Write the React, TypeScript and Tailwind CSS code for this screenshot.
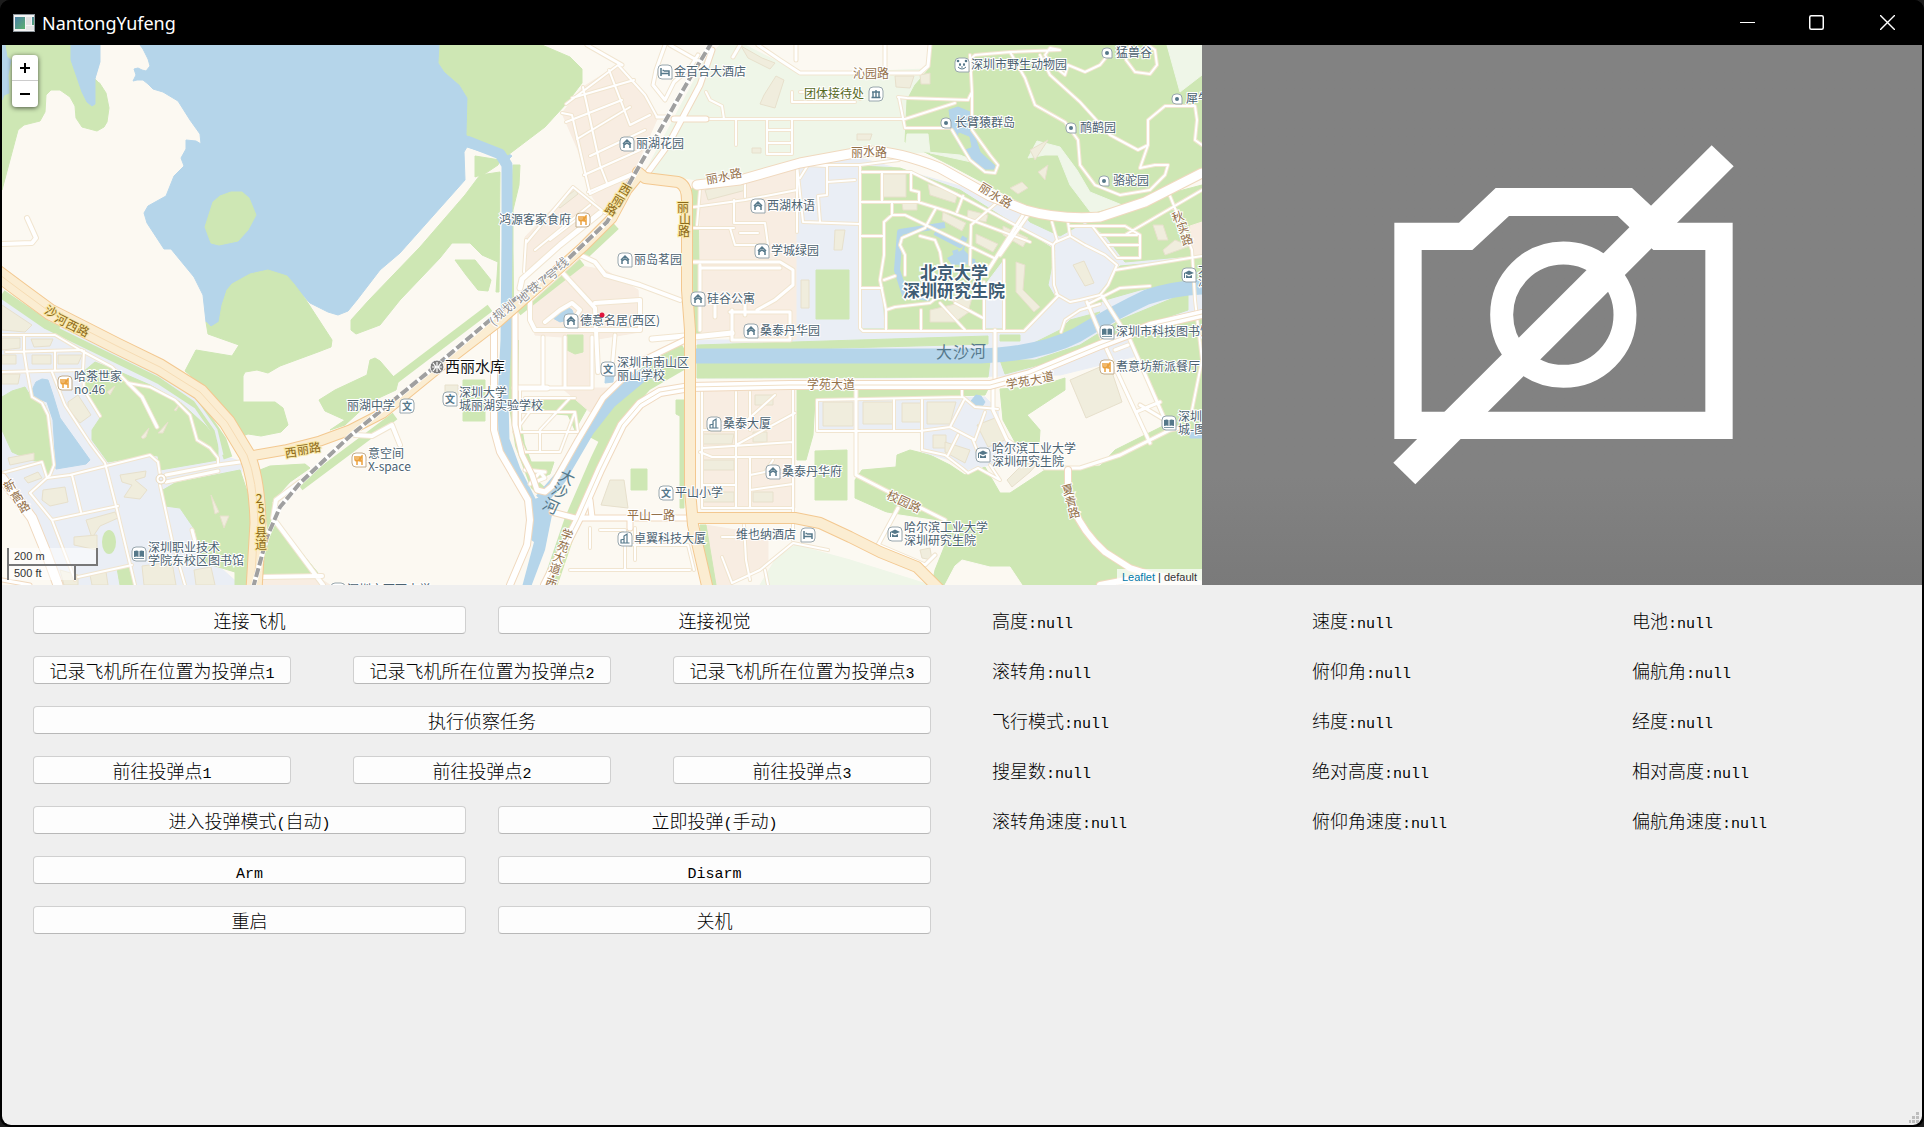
import React from "react";

const WATER = "#b5d5ea";
const GREEN = "#cee7b4";
const LIGHT = "#eff6e8";
const HOMES = "#f8ede2";
const CAMPUS = "#eaeef5";
const BUILDING = "#f0eddd";
const LAND = "#fcf9f2";
const MAP_FONT = '"Noto Sans CJK SC", "Noto Sans", sans-serif';

type Area = [fill: string, points: string];
type Road = [width: number, d: string];

const AREAS: Area[] = [
  // reservoir and its shores
  [GREEN, "2,190 18,130 24,125 40,121 45,112 46,95 51,90 60,90 70,97 75,106 76,118 82,127 97,131 104,127 107,122 109,108 106,93 97,79 71,45 2,45"],
  [WATER, "2,45 5,45 7,57 11,60 8,75 9,93 4,95 2,100"],
  [WATER, "71,45 71,60 82,92 87,102 92,106 95,104 95,79 101,62 101,45"],
  [LAND, "101,45 101,62 96,79 99,82 140,82 140,45"],
  [WATER, "140,45 143,49 148,59 150,66 146,71 142,70 138,68 134,69 136,75 133,81 137,80 143,80 148,84 153,89 163,92 178,101 190,120 200,134 201,144 196,141 186,140 186,149 181,158 184,166 174,176 166,196 148,206 144,213 147,223 164,249 171,249 194,277 203,295 206,322 211,327 219,322 224,300 298,290 310,303 328,312 338,315 348,311 357,300 380,270 400,253 465,180 464,152 467,147 508,160 512,156 502,149 467,135 468,98 460,85 445,72 439,63 440,45"],
  [GREEN, "222,305 227,290 232,284 250,274 268,270 287,276 294,284 306,300 332,340 331,347 318,352 280,366 268,373 257,370 245,372 243,376 243,402 275,402 283,408 288,425 281,432 261,436 248,434 240,437 216,398 210,392 185,371 196,350 232,356 239,345 208,334 206,322 211,327 219,322"],
  [GREEN, "205,227 213,202 220,196 231,192 242,192 249,198 256,215 248,230 238,241 219,245 211,243"],
  [GREEN, "440,45 542,45 570,57 582,69 582,83 566,104 545,127 508,155 502,150 467,135 468,98 460,85 445,72 439,63"],
  [GREEN, "351,320 369,300 420,247 465,195 480,175 500,172 499,292 496,292 498,262 482,255 470,243 452,243 440,258 420,279 400,300 380,325 356,334 351,330"],
  [GREEN, "475,156 500,160 498,165 486,173 475,177"],
  [GREEN, "455,260 475,260 491,280 488,291 478,290 466,275"],
  [GREEN, "513,165 520,165 519,185 513,210 513,250 514,340 510,340 511,210"],
  [GREEN, "319,400 335,390 367,375 370,360 375,358 380,361 398,382 396,390 370,402 345,425 330,430 345,420 325,411"],
  // west campus
  [CAMPUS, "2,297 12,297 60,325 160,372 190,395 215,430 222,455 242,462 242,472 175,485 165,500 185,510 195,530 195,545 240,585 60,585 30,515 2,478"],
  [GREEN, "2,397 12,391 25,387 33,400 45,405 50,430 52,470 47,475 42,462 30,460 12,452 2,430"],
  [WATER, "32,390 36,382 42,379 48,380 53,395 60,418 90,460 86,464 56,469 53,420 47,402 33,397"],
  [GREEN, "83,372 95,362 120,372 150,385 180,402 205,425 218,440 218,460 160,470 158,456 150,455 108,462 92,440 92,430 102,415 83,390"],
  [GREEN, "163,490 175,483 240,470 250,500 250,585 235,585 235,572 202,562 195,530 180,508 165,506"],
  [GREEN, "117,568 131,568 134,585 120,585"],
  [GREEN, "260,470 270,466 305,464 310,468 290,482 272,502 275,520 318,573 262,577 268,530"],
  [HOMES, "263,580 318,577 330,585 261,585"],
  // lower river bank
  [GREEN, "463,380 485,380 485,421 463,421"],
  [GREEN, "524,462 554,462 550,474 530,482"],
  [GREEN, "555,398 594,396 575,430 568,415 530,412 526,402"],
  [GREEN, "631,469 647,469 647,490 631,490"],
  [GREEN, "676,400 684,400 684,508 680,508 680,416 676,414"],
  // housing blocks
  [HOMES, "562,113 583,87 618,65 640,90 658,117 633,173 603,213 590,193 578,150"],
  [HOMES, "525,237 573,187 603,213 570,240 525,275"],
  [HOMES, "530,303 553,287 575,265 605,270 638,290 640,332 592,340 593,388 620,388 590,412 562,388 562,337 535,335"],
  [GREEN, "567,335 583,335 583,352 575,354 567,350"],
  [WATER, "551,317 558,311 566,306 572,310 575,318 560,322"],
  [WATER, "606,370 614,372 613,382 605,383"],
  [HOMES, "700,190 745,184 797,165 797,340 700,335"],
  [HOMES, "701,390 795,390 795,508 701,508"],
  [HOMES, "705,525 768,535 768,565 730,585 712,585"],
  [GREEN, "692,188 698,188 700,335 694,335"],
  [GREEN, "700,525 706,525 716,585 708,585"],
  // east side
  [LIGHT, "705,60 720,45 745,45 800,73 930,60 950,150 870,157 800,162 710,182 645,172 672,122"],
  [LAND, "760,45 932,45 924,68 805,73"],
  [CAMPUS, "797,168 860,158 1010,200 1202,200 1202,340 1060,375 890,378 797,378 697,378 697,340 797,340"],
  [GREEN, "932,45 1202,45 1202,168 1160,190 1130,212 1090,220 1040,212 1010,197 950,165 905,142 907,100 915,85 928,70"],
  [LIGHT, "907,134 928,134 930,153 985,165 960,155 905,150"],
  [LIGHT, "1167,45 1202,45 1202,75 1180,92"],
  [LIGHT, "1028,158 1037,141 1060,147 1077,170 1090,192 1122,205 1095,218 1070,185 1058,155 1045,155"],
  [WATER, "949,110 958,107 970,112 972,128 980,152 995,166 994,169 982,169 960,147 952,130"],
  [GREEN, "959,133 969,137 971,147 965,149 958,140"],
  [GREEN, "860,166 900,168 960,190 1055,250 1048,285 1055,297 1025,330 862,330"],
  [GREEN, "1010,200 1068,220 1202,185 1202,255 1125,262 1105,235 1085,222 1060,236 1030,222"],
  [GREEN, "1120,266 1165,262 1202,255 1202,278 1140,290 1105,300 1085,310"],
  [CAMPUS, "862,290 882,290 884,328 862,328"],
  [CAMPUS, "985,285 1004,260 1004,328 985,328"],
  [GREEN, "816,270 849,270 849,319 816,319"],
  [GREEN, "697,345 988,336 988,344 697,352"],
  [GREEN, "697,363 990,361 988,377 697,378"],
  [GREEN, "1000,360 1035,360 1080,345 1120,320 1188,292 1188,310 1100,340 1050,362 1005,374"],
  [GREEN, "1000,335 1020,335 1020,341 1000,341"],
  [GREEN, "1060,330 1070,320 1100,312 1075,330 1055,345 1030,345"],
  [GREEN, "797,389 988,389 985,395 815,400 813,435 806,460 797,460"],
  [GREEN, "1000,389 1040,386 1065,378 1065,390 1027,415 1040,430 1039,445 1015,442 1003,420"],
  [GREEN, "1130,338 1202,312 1202,580 1150,570 1120,585 932,585 935,570 945,545 900,518 855,498 855,480 862,470 896,467 897,455 910,450 930,455 950,465 965,475 985,467 1000,493 1010,493 1045,470 1100,466 1115,450 1165,425"],
  [LAND, "945,585 955,566 962,560 990,567 1010,567 1022,585"],
  [GREEN, "815,451 847,450 847,500 815,500"],
  [LIGHT, "760,585 775,560 795,545 850,560 930,585"],
  [CAMPUS, "816,400 985,397 998,410 1000,430 1015,460 965,470 950,460 922,452 920,430 816,430"],
  [LAND, "880,512 945,522 940,548 925,567 878,545"],
  [WATER, "971,401 976,395 981,396 985,402 981,408 975,407"],
  [HOMES, "1190,226 1202,222 1202,255 1194,258"],
  [WATER, "1190,430 1202,430 1202,438 1190,438"],
];

const BUILDINGS = [
  "2,305 32,325 25,332 2,330", "2,338 20,338 20,348 2,350", "2,355 16,355 16,364 2,364", "31,339 53,339 50,346 34,347",
  "32,355 51,355 51,364 32,364", "58,355 82,355 78,364 58,364", "2,374 20,374 18,384 2,384", "68,402 78,395 91,415 80,423 68,408",
  "8,458 34,453 34,460 10,465", "24,478 38,472 42,478 28,483", "43,490 65,487 68,502 50,506 42,500", "120,475 146,471 145,477 135,480 147,490 140,499 124,497 132,485 122,482",
  "86,520 115,512 118,518 100,526 92,538", "74,537 97,535 97,550 74,545", "142,566 172,562 176,585 144,585", "60,570 78,575 78,585 64,585", "90,575 106,572 108,585 92,585", "194,570 211,567 215,585 196,585",
  "141,437 149,428 146,437 143,439", "107,392 115,386 110,395", "158,433 168,422 163,433", "174,410 181,402 176,411", "211,495 219,512 215,514", "220,516 229,516 224,528",
  "764,95 776,76 784,80 775,108 760,104", "741,46 762,58 775,63 770,69 748,58", "895,76 914,76 910,88 896,87", "920,75 930,73 930,84 921,84",
  "556,205 575,190 578,194 560,208", "705,190 745,182 746,190 708,200", "883,174 906,174 906,197 883,197", "928,184 958,193 955,203 930,195", "902,203 917,203 917,210 903,210",
  "943,212 966,223 962,231 942,220", "968,210 988,215 986,222 967,218", "976,234 998,244 993,252 976,243", "1003,226 1028,238 1023,247 1003,235", "1016,262 1025,265 1023,290 1040,307 1034,312 1016,292",
  "1073,265 1084,261 1094,283 1085,286", "930,310 955,304 972,310 955,322 930,322", "950,300 972,298 968,312", "1030,150 1048,140 1035,160", "1038,172 1048,165 1045,180", "1010,188 1022,182 1028,188 1018,194",
  "1163,250 1175,240 1190,246 1165,255", "1153,225 1163,225 1168,240 1158,240", "835,230 845,230 842,250 834,250", "801,280 809,280 809,308 801,308",
  "1070,380 1109,363 1122,402 1086,418", "823,402 853,402 853,426 823,426", "863,402 894,402 894,424 863,424", "902,403 921,403 921,422 902,422", "927,402 956,402 950,424 927,424",
  "933,435 946,435 946,448 933,448", "945,442 970,450 965,463 945,452", "977,425 995,418 1005,440 988,447", "1007,480 1020,467 1045,455 1030,472 1012,487",
  "601,505 610,480 624,480 628,508", "755,395 773,395 773,405 755,405", "703,434 734,434 732,444 703,444", "753,432 767,432 767,442 753,442", "703,460 734,460 734,470 703,470", "703,492 734,492 734,502 703,502", "753,492 773,492 773,502 753,502",
  "752,148 761,148 761,153 752,153", "857,134 872,134 870,140 857,140", "445,385 458,385 458,395 445,395", "920,550 930,548 932,560 922,558",
];

const LANES: Road[] = [
  // western campus streets
  [2, "M2,335H55L82,351L112,367L128,383L150,387L175,400L190,415L197,440L210,448L218,458L218,465"],
  [2, "M6,352L82,350M24,335V352L27,371M55,351V370M2,372L83,370L84,351"],
  [2, "M27,371L32,397L42,403L48,415L54,465L50,475L30,493"],
  [2, "M83,370L84,390L100,416M52,372L65,405L90,443L105,463L117,510L135,585"],
  [2, "M2,473L42,462L47,478L70,475L150,455L158,462L160,475M30,493L52,520L75,580M52,520L118,506M72,475L81,512M160,485L172,540L185,585M78,577L132,565"],
  [3, "M166,475L218,465L240,462M166,482L218,471M128,383L142,397L157,427M192,530L196,545"],
  [4, "M2,244L32,243L36,238L27,218"],
  [4, "M355,435L372,436L392,425L400,445M273,518L276,500L300,482M273,518L323,585M262,577L322,576"],
  // streets by the railway
  [2, "M577,139L630,107M566,122L622,100M583,87L600,165L607,183M609,70L630,125L650,115M590,156L645,130M584,175L640,150M588,192L635,172M572,98L634,80M562,113L572,115L590,194L605,187L633,175M566,104L618,65L645,95L657,117"],
  [2, "M573,187L605,213M526,243L573,187M535,250L590,205M550,240L580,217M524,272L526,240"],
  [5, "M520,288L522,279L560,245L600,213"],
  [3, "M657,117H668M674,119H706M587,45L622,65"],
  [2, "M706,119H905L955,103M736,119V145M767,119V154H792V119M767,130H792M767,143H792M706,92L710,100L722,106L724,119M792,92V102H855M800,92H860V99M899,98L905,128H950"],
  [3, "M665,45L656,70L653,85L665,100L674,82L690,68L698,55M670,45L700,62M740,45L733,57M758,45L780,60L800,73H920L928,66L930,45M796,45V60M885,45V72"],
  [4, "M560,270L595,308L598,372M595,303L640,300V330H535L530,320V300L558,275L580,255L595,262L605,275L640,285L680,300M545,322L560,310L572,303L580,310L572,322"],
  [3, "M543,337V388M565,337V388M592,337V388M514,388H592M615,335L612,370M640,300V330"],
  [2, "M525,398H575M520,412H575L578,432M520,390V430M514,432H580M540,398L520,425M570,398L540,430M575,412L560,452H525L515,430M540,432V452"],
  [3, "M530,484L540,472L545,478L535,482M525,470L545,472"],
  [2, "M600,530H625V570M590,528V548M635,528V560M570,570H690M630,545H688L694,570"],
  // housing grid
  [2, "M694,207L745,200L797,190M700,190L697,225M745,175V197M734,200V223H765L768,245H735L730,228M694,228H734M740,233H758M797,165V232"],
  [3, "M694,262H780M700,268H780M700,265V330M780,262L793,270V285L775,300L757,310M730,312H790V340L732,340V310M745,300V315M715,300V317"],
  [2, "M702,392V508H793V390M736,392V508M750,392V430M702,430H736L775,395M795,413L736,445M702,448L793,442M700,452L712,457H793M750,457V508M702,485H736M750,475L765,472L773,460M750,490L793,484M793,508V540"],
  [5, "M652,339L685,336M694,337L732,333M515,388H547"],
  [2, "M722,537H765M722,557L732,583M744,525L746,560L750,580M732,583L760,570L793,543L828,550M765,570L768,585"],
  // university streets
  [2, "M860,165V328L863,331H1024L1058,296L1054,285L1053,245L1028,232L960,196L911,172H862M800,165L860,165L899,160V155"],
  [2, "M882,172V202M911,172V190L919,192V202M860,202H918L950,212L1030,242M963,196L957,212M892,202V215L884,222V255L880,280L886,310V330M860,236H884M860,288H882M884,280L895,276M892,215H905L994,258M936,208L925,228L902,238L900,245L905,255V275M920,236L935,240L940,252L942,265M971,225L970,265M971,225L1000,200"],
  [2, "M886,310L895,307L930,303L940,295M921,310V330M984,282V330M1004,260V330M955,303L983,318M940,303L965,330"],
  [3, "M1025,212L985,275M1025,212L1028,215L1000,255"],
  [2, "M797,165L803,222M803,222L860,224M800,178L808,165L827,166V195L818,196L820,222M827,182L855,180"],
  [2, "M1052,222L1057,240L1053,245M1068,222L1070,236L1056,242M1070,236L1085,245L1105,255L1117,265L1108,285L1100,295L1080,300L1070,302L1056,294M1115,270L1165,262L1202,256M1070,226H1125L1140,235L1140,258H1117L1093,227M1100,235H1137M1107,245H1140M1125,235L1202,190M1170,196L1192,250L1195,300L1202,360L1192,410"],
  [3, "M1087,302L1107,350L1150,443M1102,296L1130,340L1165,420L1140,405M1136,412L1160,402M1115,350L1128,345"],
  [2, "M1061,332L1065,320L1080,310L1100,304M1088,304L1120,288L1150,286"],
  // safari park paths
  [2, "M970,55L972,92L968,100L907,98L898,97M972,92V130L990,155L998,165L995,173L985,172L970,160L952,130"],
  [2, "M969,60L975,55L1010,52L1060,50L1050,48L1045,55L1052,65L1065,75L1068,65L1085,72L1100,65L1108,55M1010,52L1025,78L1035,105L1065,122L1078,140L1080,165L1095,185L1120,195L1150,190L1165,175L1168,165L1155,165L1140,168L1148,145L1148,120L1165,106H1195L1197,120L1195,140L1202,145M1040,55L1050,75L1080,102L1110,135L1138,150L1148,145M1130,45L1126,60L1135,72L1150,74L1157,65L1155,50L1148,45"],
  // south-east
  [3, "M995,330V386M993,386V410L1007,440L1030,455M856,390V475L885,490L945,520M898,508L878,545M878,545L925,565L935,555"],
  [2, "M817,430V400L963,397L975,407L998,409M817,431H920L950,427L964,400M894,400V430M922,400V450L945,455L962,468L968,473L978,468L1000,480L990,465M950,427L975,440L985,412M958,435L948,455M962,388V397M973,440L980,458"],
  [3, "M1045,468H1080L1120,455L1170,430L1185,427"],
];

const WHITE_ROADS: Road[] = [
  [9, "M697,185L740,180L800,163L860,152Q890,148 940,168L990,196L1025,210Q1060,220 1100,217L1145,202L1202,173"],
  [8, "M545,585L578,520L600,470L622,425L640,404L660,392L690,387L790,385L990,385L1030,374L1100,345L1150,326L1202,314"],
  [6, "M494,325V430L500,452L528,500L530,520L527,545L510,585"],
  [5, "M515,300V425L522,455L532,475L537,490L545,492L552,486L578,440L603,398L640,362L685,340"],
  [5, "M552,512L575,518H688M592,517L590,500M630,518V528"],
  [5, "M712,50L700,85L668,145L646,175M674,119H706"],
  [9, "M2,478L32,518L45,550L58,585"],
  [6, "M1068,470V490Q1075,525 1105,552L1130,568L1152,575M1152,575L1100,585"],
  [3, "M2,580L30,585"],
];

const HIGHWAYS: Road[] = [
  [15, "M-4,272L20,290L50,312L117,346L160,367L200,392L227,422L247,455Q257,480 258,523L254,590"],
  [9, "M250,456L285,450L320,441L350,430L383,413L437,369L497,323L553,274L583,247L612,218L627,190L640,174"],
  [10, "M638,172L645,178L678,182Q687,185 687,200V290L690,330V490L693,525L708,590"],
  [10, "M693,518H795L820,523L850,537L880,552L917,567L940,590"],
];

const RAIL = "M712,42L690,78L663,125L637,170L607,222L567,260L510,303L437,365L400,395L350,436L300,483L280,507L267,537L253,588";

type Kind = "home" | "food" | "school" | "hotel" | "book" | "cap" | "office" | "dot" | "hall" | "panda";
type Place = { kind: Kind; x: number; y: number; lines: string[]; left?: boolean };

const PLACES: Place[] = [
  { kind: "hotel", x: 665, y: 72, lines: ["金百合大酒店"] },
  { kind: "home", x: 627, y: 144, lines: ["丽湖花园"] },
  { kind: "food", x: 583, y: 220, lines: ["鸿源客家食府"], left: true },
  { kind: "home", x: 625, y: 260, lines: ["丽岛茗园"] },
  { kind: "home", x: 571, y: 321, lines: ["德意名居(西区)"] },
  { kind: "home", x: 758, y: 206, lines: ["西湖林语"] },
  { kind: "home", x: 762, y: 251, lines: ["学城绿园"] },
  { kind: "home", x: 698, y: 299, lines: ["硅谷公寓"] },
  { kind: "home", x: 751, y: 331, lines: ["桑泰丹华园"] },
  { kind: "panda", x: 962, y: 65, lines: ["深圳市野生动物园"] },
  { kind: "hall", x: 876, y: 94, lines: ["团体接待处"], left: true },
  { kind: "dot", x: 946, y: 123, lines: ["长臂猿群岛"] },
  { kind: "dot", x: 1071, y: 128, lines: ["鸸鹋园"] },
  { kind: "dot", x: 1107, y: 53, lines: ["猛兽谷"] },
  { kind: "dot", x: 1177, y: 99, lines: ["犀牛园"] },
  { kind: "dot", x: 1104, y: 181, lines: ["骆驼园"] },
  { kind: "cap", x: 1189, y: 275, lines: ["大", "深"] },
  { kind: "book", x: 1107, y: 332, lines: ["深圳市科技图书馆"] },
  { kind: "food", x: 1107, y: 367, lines: ["煮意坊新派餐厅"] },
  { kind: "book", x: 1169, y: 423, lines: ["深圳市", "城-图书"] },
  { kind: "cap", x: 983, y: 455, lines: ["哈尔滨工业大学", "深圳研究生院"] },
  { kind: "cap", x: 895, y: 534, lines: ["哈尔滨工业大学", "深圳研究生院"] },
  { kind: "home", x: 773, y: 472, lines: ["桑泰丹华府"] },
  { kind: "office", x: 714, y: 424, lines: ["桑泰大厦"] },
  { kind: "hotel", x: 808, y: 535, lines: ["维也纳酒店"], left: true },
  { kind: "school", x: 666, y: 493, lines: ["平山小学"] },
  { kind: "office", x: 625, y: 539, lines: ["卓翼科技大厦"] },
  { kind: "school", x: 608, y: 369, lines: ["深圳市南山区", "丽山学校"] },
  { kind: "school", x: 450, y: 399, lines: ["深圳大学", "城丽湖实验学校"] },
  { kind: "school", x: 407, y: 406, lines: ["丽湖中学"], left: true },
  { kind: "food", x: 359, y: 460, lines: ["意空间", "X-space"] },
  { kind: "food", x: 65, y: 383, lines: ["哈茶世家", "no.46"] },
  { kind: "book", x: 139, y: 554, lines: ["深圳职业技术", "学院东校区图书馆"] },
  { kind: "home", x: 338, y: 590, lines: ["深圳市西丽中学"] },
];

type Street = { text: string; at: [number, number][]; turn?: number; tone?: "brown" | "gold" | "rail" | "river" };

const STREETS: Street[] = [
  { text: "沁园路", at: [[859, 74], [871, 74], [883, 74]] },
  { text: "丽水路", at: [[712, 179], [724, 177], [736, 174]], turn: -11 },
  { text: "丽水路", at: [[857, 153], [869, 152], [881, 153]] },
  { text: "丽水路", at: [[985, 189], [995, 196], [1006, 202]], turn: 32 },
  { text: "秋实路", at: [[1178, 217], [1183, 228], [1187, 240]], turn: -18 },
  { text: "学苑大道", at: [[813, 385], [825, 385], [837, 385], [849, 385]] },
  { text: "学苑大道", at: [[1012, 384], [1024, 382], [1036, 380], [1048, 377]], turn: -10 },
  { text: "校园路", at: [[893, 497], [904, 502], [915, 507]], turn: 25 },
  { text: "夏青路", at: [[1068, 490], [1071, 502], [1074, 513]], turn: -15 },
  { text: "平山一路", at: [[633, 516], [645, 516], [657, 516], [669, 516]] },
  { text: "学苑大道·西", at: [[567, 535], [563, 547], [559, 558], [555, 569], [553, 577], [551, 584]], turn: 18 },
  { text: "新高路", at: [[10, 486], [17, 497], [24, 507]], turn: -30 },
  { text: "西丽路", at: [[625, 190], [618, 201], [611, 210]], turn: 30, tone: "gold" },
  { text: "丽山路", at: [[683, 208], [685, 220], [684, 232]], tone: "gold" },
  { text: "沙河西路", at: [[51, 312], [61, 320], [72, 326], [83, 331]], turn: 27, tone: "gold" },
  { text: "西丽路", at: [[291, 453], [303, 450], [315, 448]], turn: -8, tone: "gold" },
  { text: "256县道", at: [[259, 499], [261, 509], [262, 520], [261, 533], [261, 545]], tone: "gold" },
  { text: "(规划地铁7号线", at: [[493, 322], [499, 315], [509, 307], [523, 298], [534, 288], [543, 281], [552, 275], [562, 264]], turn: -38, tone: "rail" },
  { text: "大沙河", at: [[567, 477], [560, 491], [551, 506]], turn: 25, tone: "river" },
  { text: "大沙河", at: [[944, 352], [961, 352], [978, 351]], tone: "river" },
];

const TONES = {
  brown: { fill: "#94714a", halo: "#ffffff", size: 12 },
  gold: { fill: "#8c6818", halo: "#f8e7a5", size: 12 },
  rail: { fill: "#8d8d8d", halo: "#ffffff", size: 12 },
  river: { fill: "#55798c", halo: "none", size: 16 },
};

function Glyph({ kind }: { kind: Kind }) {
  const c = "#55788a";
  switch (kind) {
    case "home":
      return <path d="M-4 0L0 -4L4 0M-3 4V1L0 -1L3 1V4" fill="none" stroke={c} strokeWidth="1.5" />;
    case "food":
      return <path d="M-4 -4V-1Q-4 1 -2 1Q0 1 0 -1V-4M-2 -4V5M3 5V-4Q1 -3 1 1H3" fill="none" stroke="#eba13c" strokeWidth="1.5" />;
    case "school":
      return <text x="0" y="4" textAnchor="middle" fontSize="10" fontWeight="700" fill={c}>文</text>;
    case "hotel":
      return <path d="M-4 -4V4M-4 1.500H4M4 4V-1H-1M-2.500 -1.500H-1" fill="none" stroke={c} strokeWidth="1.5" />;
    case "book":
      return <path d="M-5 -3Q-2 -4 -.5 -3V3Q-2 2 -5 3ZM5 -3Q2 -4 .5 -3V3Q2 2 5 3ZM-5 4H5V4.700H-5Z" fill={c} />;
    case "cap":
      return <path d="M-5 -2L0 -4.500L5 -2L0 0ZM-3 0L0 1.500L3 0V3H-3ZM-5 -2H-4V3H-5Z" fill={c} />;
    case "office":
      return <path d="M-4 4V1L-1 0V4ZM-1 4V-3L2 -5V4ZM-4.500 4H4.500" fill="none" stroke={c} strokeWidth="1.2" />;
    case "hall":
      return <path d="M-4 -2H4M0 -4V-2M-3 -2V3M0 -2V3M3 -2V3M-4.500 3.500H4.500" fill="none" stroke={c} strokeWidth="1.4" />;
    case "panda":
      return (
        <g fill={c}>
          <circle cx="-4" cy="-4" r="1.300" />
          <circle cx="4" cy="-4" r="1.300" />
          <ellipse cx="-2" cy="-.5" rx="1" ry="1.500" />
          <ellipse cx="2" cy="-.5" rx="1" ry="1.500" />
          <path d="M-4 2Q0 6 4 2" fill="none" stroke={c} />
          <circle cx="0" cy="2" r=".8" />
        </g>
      );
    default:
      return <circle r="2" fill={c} />;
  }
}

function PlaceMark({ kind, x, y, lines, left }: Place) {
  const r = kind === "dot" ? 5 : 7;
  const k = r - 4;
  // the corner next to the label is square
  const box = left
    ? `M${-r} ${-k}Q${-r} ${-r} ${-k} ${-r}H${k}Q${r} ${-r} ${r} ${-k}V${k}Q${r} ${r} ${k} ${r}H${-r}Z`
    : `M${-r} ${-k}Q${-r} ${-r} ${-k} ${-r}H${k}Q${r} ${-r} ${r} ${-k}V${r}H${-k}Q${-r} ${r} ${-r} ${k}Z`;
  return (
    <g transform={`translate(${x} ${y})`}>
      <path d={box} fill="#fff" stroke={kind === "food" ? "#c3ad8c" : "#98a6ad"} />
      <Glyph kind={kind} />
      {lines.map((line, i) => (
        <text
          key={line}
          x={left ? -12 : 9}
          y={4 + (i * 13 - (lines.length - 1) * 6)}
          textAnchor={left ? "end" : "start"}
          fontSize="12"
          fill={kind === "hall" ? "#56691c" : "#4c6270"}
          stroke="#fff"
          strokeWidth="2"
          paintOrder="stroke"
        >
          {line}
        </text>
      ))}
    </g>
  );
}

function Roads({ roads, casing, fill }: { roads: Road[]; casing: string; fill: string }) {
  return (
    <g fill="none" strokeLinejoin="round" strokeLinecap="round">
      {roads.map(([w, d]) => <path key={"c" + d} d={d} stroke={casing} strokeWidth={w + 2} />)}
      {roads.map(([w, d]) => <path key={"f" + d} d={d} stroke={fill} strokeWidth={w} />)}
    </g>
  );
}

function MapDrawing() {
  return (
    <svg className="block h-full w-full" viewBox="2 45 1200 540" preserveAspectRatio="xMidYMid slice" fontFamily={MAP_FONT} role="img" aria-label="地图">
      <rect x="-400" y="-400" width="2400" height="1600" fill={LAND} />
      {AREAS.map(([fill, points]) => (
        <polygon key={points} points={points} fill={fill} stroke={fill} strokeWidth="1" strokeLinejoin="round" />
      ))}
      <ellipse cx="109" cy="542" rx="7" ry="12" fill={GREEN} />
      <g fill="none" stroke={GREEN} strokeLinejoin="round">
        <path d="M2,294L47,325L115,358L160,380L198,405L222,440L228,458" strokeWidth="9" />
        <path d="M300,487L395,416M395,380L490,308M583,257L616,226M518,312L582,262" strokeWidth="8" />
        <path d="M514,340L513,400L520,445L535,485L545,494L555,488" strokeWidth="10" />
        <path d="M548,590L572,520L598,460L622,410L645,384L690,358" strokeWidth="15" />
        <path d="M595,440L618,398L650,370L685,350" strokeWidth="14" />
      </g>
      <path d="M60,327L160,376L195,400L216,430L222,455" fill="none" stroke={CAMPUS} strokeWidth="3" />
      <g fill="none" stroke={WATER} strokeLinejoin="round">
        <path d="M467,141L500,154L507,165L507,240L506,340L503,400L504,440L515,470L535,510" strokeWidth="11" />
        <path d="M541,500L560,478L588,430L610,402L640,377L652,371" strokeWidth="13" />
        <path d="M696,356H980Q1040,354 1077,335Q1115,312 1147,297Q1175,288 1204,287" strokeWidth="15" />
        <path d="M945,225L900,232L897,270L905,295L930,298M935,232L960,245L965,237M955,250L958,260L975,262" strokeWidth="6" />
      </g>
      <polygon points="532,500 548,494 553,510 545,550 531,587 522,587 534,542 531,540" fill={WATER} />
      <polygon points="968,235 962,250 947,258 952,265 978,264 964,250" fill={WATER} />
      <polygon points="1055,245 1070,237 1085,243 1110,262 1108,282 1095,298 1075,300 1057,290" fill={CAMPUS} />
      <g fill={BUILDING} stroke="#e7e0cc" strokeWidth="1">
        {BUILDINGS.map((points) => <polygon key={points} points={points} />)}
      </g>
      <Roads roads={LANES} casing="#f1e5d0" fill="#ffffff" />
      <Roads roads={WHITE_ROADS} casing="#f0d9bf" fill="#ffffff" />
      <path d={WHITE_ROADS[1][1]} fill="none" stroke="#f0e0c8" />
      <circle cx="161" cy="479" r="5" fill="#fff" stroke="#ead9bb" />
      <circle cx="161" cy="479" r="2" fill={CAMPUS} stroke="#ead9bb" />
      <Roads roads={HIGHWAYS} casing="#f3c890" fill="#fbedd2" />
      <path d={HIGHWAYS[0][1]} fill="none" stroke="#f6dcb4" />
      <path d={RAIL} fill="none" stroke="#ffffff" strokeWidth="5" />
      <path d={RAIL} fill="none" stroke="#a0a0a0" strokeWidth="4" strokeDasharray="9 3" />
      {STREETS.map(({ text, at, turn = 0, tone = "brown" }) => {
        const { fill, halo, size } = TONES[tone];
        return (
          <g key={text + at[0]} fontSize={size} fill={fill} stroke={halo} strokeWidth="2" paintOrder="stroke" textAnchor="middle">
            {at.map(([x, y], i) => (
              <text key={i} transform={`translate(${x} ${y}) rotate(${turn})`} y={Math.round(size * 0.36)}>{text[i]}</text>
            ))}
          </g>
        );
      })}
      {PLACES.map((p) => <PlaceMark key={p.x + "-" + p.y} {...p} />)}
      <g transform="translate(437 367)">
        <circle r="7" fill="#7f7f7f" stroke="#fff" />
        <path d="M-4 -4L-1 0L-4 4M4 -4L1 0L4 4M0 -5V5M-5 0H5" fill="none" stroke="#fff" strokeWidth="1.2" />
      </g>
      <text x="445" y="372" fontSize="15" fill="#111" stroke="#fff" strokeWidth="2" paintOrder="stroke">西丽水库</text>
      <g fontSize="17" fontWeight="700" fill="#3f5d74" stroke="#fff" strokeWidth="3" paintOrder="stroke" textAnchor="middle">
        <text x="954" y="279">北京大学</text>
        <text x="954" y="297">深圳研究生院</text>
      </g>
      <circle cx="602" cy="315" r="2.500" fill="#e0143c" />
    </svg>
  );
}

function MapPanel() {
  return (
    <section className="relative min-h-0 min-w-0 flex-[5] overflow-hidden font-['Liberation_Sans',sans-serif]">
      <MapDrawing />
      <div className="absolute left-[10px] top-[10px] flex w-[26px] flex-col overflow-hidden rounded-[4px] bg-white text-black shadow-[0_1px_5px_rgba(0,0,0,0.65)]">
        <button type="button" aria-label="Zoom in" className="flex h-[26px] items-center justify-center border-b border-[#ccc]">
          <svg width="12" height="12" viewBox="0 0 12 12"><path d="M1 6H11M6 1V11" stroke="#000" strokeWidth="2" /></svg>
        </button>
        <button type="button" aria-label="Zoom out" className="flex h-[26px] items-center justify-center">
          <svg width="12" height="12" viewBox="0 0 12 12"><path d="M1 6H11" stroke="#000" strokeWidth="2" /></svg>
        </button>
      </div>
      <div className="absolute bottom-[5px] left-[5px] text-[11px] leading-[14px] text-[#333]">
        <div className="h-[18px] w-[91px] border-2 border-t-0 border-[#777] bg-white/50 px-[5px] pt-px">200 m</div>
        <div className="-mt-[2px] h-[16px] w-[69px] border-x-2 border-t-2 border-[#777] bg-white/50 px-[5px]">500 ft</div>
      </div>
      <div className="absolute bottom-0 right-0 bg-white/70 px-[5px] text-[11px] leading-[16px] text-[#333]">
        <a href="#leaflet" className="text-[#0078a8]">Leaflet</a> | default
      </div>
    </section>
  );
}

function CameraPanel() {
  return (
    <section className="min-h-0 min-w-0 flex-[3] bg-linear-to-b from-[#828282] from-80% to-[#7a7a7a]">
      <svg className="block h-full w-full" viewBox="-414 -225 2160 1620" role="img" aria-label="无视频信号">
        <path
          fill="#fff"
          fillRule="evenodd"
          d="M163 308H357L467 204H876L988 308H1178V957H163ZM245 390V875H1096V390H940L833 288H507L397 390Z"
        />
        <circle cx="670" cy="584" r="185" fill="none" stroke="#fff" strokeWidth="69" />
        <path fill="#fff" d="M1115 76L1181 139L226 1093L160 1028Z" />
      </svg>
    </section>
  );
}

/** Sets Latin runs in a half-width monospace beside the full-width Chinese glyphs. */
function Mixed({ text }: { text: string }) {
  return (
    <>
      {text.split(/([\x20-\x7e]+)/).filter(Boolean).map((part, i) =>
        /[\x20-\x7e]/.test(part)
          ? <span key={i} className="font-['Liberation_Mono',monospace] text-[15px] font-normal leading-none">{part}</span>
          : <span key={i}>{part}</span>
      )}
    </>
  );
}

const COMMANDS = [
  ["连接飞机", "连接视觉"],
  ["记录飞机所在位置为投弹点1", "记录飞机所在位置为投弹点2", "记录飞机所在位置为投弹点3"],
  ["执行侦察任务"],
  ["前往投弹点1", "前往投弹点2", "前往投弹点3"],
  ["进入投弹模式(自动)", "立即投弹(手动)"],
  ["Arm", "Disarm"],
  ["重启", "关机"],
];

const READINGS = [
  "高度", "速度", "电池",
  "滚转角", "俯仰角", "偏航角",
  "飞行模式", "纬度", "经度",
  "搜星数", "绝对高度", "相对高度",
  "滚转角速度", "俯仰角速度", "偏航角速度",
];

function CommandPanel() {
  return (
    <div className="flex min-w-0 flex-col gap-[22px] px-[31px]">
      {COMMANDS.map((row) => (
        <div key={row[0]} className={row.length === 3 ? "flex gap-[62px]" : "flex gap-[32px]"}>
          {row.map((label) => (
            <button
              key={label}
              type="button"
              className="flex h-[28px] min-w-0 flex-1 items-center justify-center whitespace-nowrap rounded-[4px] border border-[#d0d0d0] border-b-[#b8b8b8] bg-[#fdfdfd]"
            >
              <span><Mixed text={label} /></span>
            </button>
          ))}
        </div>
      ))}
    </div>
  );
}

function ReadingPanel() {
  return (
    <div className="grid min-w-0 auto-rows-[28px] grid-cols-3 content-start gap-y-[22px]">
      {READINGS.map((name) => (
        <p key={name} className="whitespace-nowrap pl-[30px] leading-[28px]"><Mixed text={name + ":null"} /></p>
      ))}
    </div>
  );
}

function TitleBar() {
  return (
    <header className="flex h-[45px] shrink-0 items-center bg-black pl-[13px] text-white">
      <svg width="22" height="18" viewBox="0 0 22 18" aria-hidden="true">
        <defs>
          <linearGradient id="pane" x1="0" y1="0" x2="1" y2="1">
            <stop offset="0" stopColor="#4a7fa8" />
            <stop offset="1" stopColor="#5cb06d" />
          </linearGradient>
        </defs>
        <rect width="22" height="18" fill="#8d959b" />
        <rect x="1" y="1" width="20" height="16" fill="#f4f4f4" />
        <rect x="2" y="3" width="10" height="12" fill="url(#pane)" />
        <rect x="13" y="3" width="5" height="8" fill="#e2e2e2" />
        <rect x="19" y="3" width="2" height="8" fill="url(#pane)" />
        <rect x="13" y="12" width="8" height="4" fill="#e6e6e6" />
      </svg>
      <h1 className="ml-[7px] flex-1 font-['Noto_Sans',sans-serif] text-[18px] leading-[24px]">NantongYufeng</h1>
      <button type="button" aria-label="Minimize" className="flex h-[45px] w-[69px] items-center justify-center">
        <svg width="15" height="15" viewBox="0 0 15 15"><path d="M0 7.500H15" stroke="#fff" /></svg>
      </button>
      <button type="button" aria-label="Maximize" className="flex h-[45px] w-[69px] items-center justify-center">
        <svg width="15" height="15" viewBox="0 0 15 15"><rect x=".75" y=".75" width="13.500" height="13.500" rx="1.500" fill="none" stroke="#fff" strokeWidth="1.500" /></svg>
      </button>
      <button type="button" aria-label="Close" className="flex h-[45px] w-[73px] items-center justify-center">
        <svg width="15" height="15" viewBox="0 0 15 15"><path d="M0 0L15 15M15 0L0 15" stroke="#fff" strokeWidth="1.400" /></svg>
      </button>
    </header>
  );
}

export default function App() {
  return (
    <div className="flex h-screen flex-col bg-[#1c1c1c]">
      <div className="flex min-h-0 flex-1 flex-col overflow-hidden rounded-[10px] bg-black">
        <TitleBar />
        <main className="mx-[2px] mb-[2px] grid min-h-0 flex-1 grid-rows-2 overflow-hidden rounded-b-[9px] bg-[#efefef]">
          <div className="flex min-h-0 min-w-0">
            <MapPanel />
            <CameraPanel />
          </div>
          <div className="relative grid min-h-0 min-w-0 grid-cols-2 pt-[21px] font-['Noto_Sans_CJK_SC',sans-serif] text-[18px] font-light leading-[24px] text-black">
            <CommandPanel />
            <ReadingPanel />
            <svg className="absolute bottom-[2px] right-[3px]" width="10" height="11" viewBox="0 0 10 11" aria-hidden="true">
              <path fill="#bdbdbd" d="M7 0h3v3H7zM3 4h3v3H3zM7 4h3v3H7zM0 8h2v3H0zM3 8h3v3H3zM7 8h3v3H7z" />
            </svg>
          </div>
        </main>
      </div>
    </div>
  );
}
